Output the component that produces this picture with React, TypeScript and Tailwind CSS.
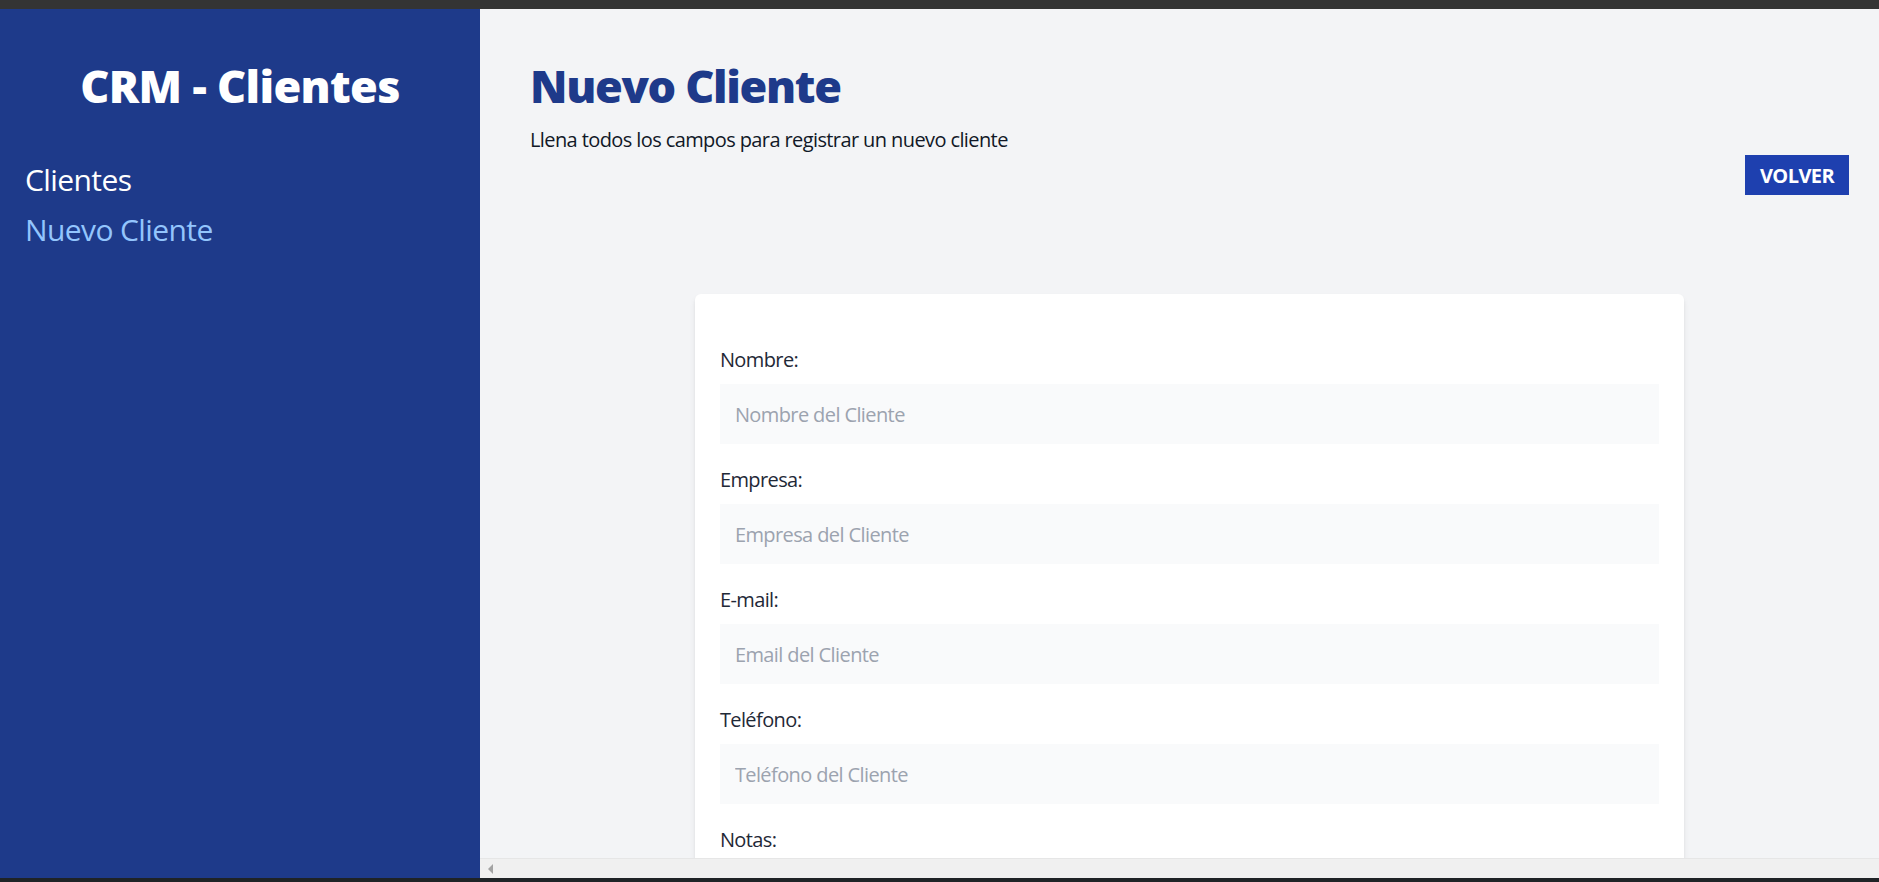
import React from "react";

const font = { fontFamily: '"Open Sans", "Noto Sans", sans-serif' };

function Field({ label, placeholder, type = "text" }: { label: string; placeholder: string; type?: string }) {
  return (
    <div className="mb-[20px]">
      <label className="block mb-[9px] pt-[1px] text-[20px] leading-[30px] text-[#1f2937] tracking-[-0.03em]">{label}</label>
      <input
        type={type}
        placeholder={placeholder}
        className="block w-full bg-[#f9fafb] px-[15px] pt-[16px] pb-[14px] text-[20px] leading-[30px] tracking-[-0.03em] text-[#1f2937] placeholder:text-[#9ca3af] outline-none"
      />
    </div>
  );
}

export default function App() {
  return (
    <div className="h-screen flex flex-col bg-[#1f2326] overflow-hidden" style={font}>
      <div className="h-[9px] shrink-0 bg-[#343434]" />
      <div className="flex flex-1 min-h-0">
        <aside className="w-[480px] shrink-0 bg-[#1e3a8a] px-[25px] pt-[52px]">
          <h1 className="text-center text-white text-[45px] leading-[50px] font-black tracking-[-0.015em]">CRM - Clientes</h1>
          <nav className="mt-[49px] flex flex-col gap-[10px]">
            <a className="text-[30px] leading-[40px] text-white tracking-[-0.02em]">Clientes</a>
            <a className="text-[30px] leading-[40px] text-[#93c5fd] tracking-[-0.02em]">Nuevo Cliente</a>
          </nav>
        </aside>
        <div className="flex-1 min-w-0 flex flex-col bg-[#f3f4f6]">
          <div className="flex-1 min-h-0 overflow-hidden">
            <main className="w-[1419px] p-[50px]">
              <h2 className="mt-[2px] text-[45px] leading-[50px] font-black text-[#1e3a8a] tracking-[-0.03em]">Nuevo Cliente</h2>
              <p className="mt-[14px] text-[20px] leading-[30px] text-[#111827] tracking-[-0.03em]">
                Llena todos los campos para registrar un nuevo cliente
              </p>
              <div className="flex justify-end">
                <button className="bg-[#1e40af] text-white font-bold uppercase text-[20px] leading-[30px] px-[15px] pt-[6px] pb-[4px] tracking-[-0.03em]">
                  Volver
                </button>
              </div>
              <div className="mt-[99px] mx-auto w-3/4 bg-white rounded-[6px] shadow-md px-[25px] py-[50px]">
                <form>
                  <Field label="Nombre:" placeholder="Nombre del Cliente" />
                  <Field label="Empresa:" placeholder="Empresa del Cliente" />
                  <Field label="E-mail:" placeholder="Email del Cliente" type="email" />
                  <Field label="Teléfono:" placeholder="Teléfono del Cliente" type="tel" />
                  <div className="mb-[20px]">
                    <label className="block mb-[9px] pt-[1px] text-[20px] leading-[30px] text-[#1f2937] tracking-[-0.03em]">Notas:</label>
                    <textarea className="block w-full h-[200px] bg-[#f9fafb] p-[15px] text-[20px] leading-[30px] outline-none" />
                  </div>
                </form>
              </div>
            </main>
          </div>
          <div className="h-[20px] shrink-0 bg-[#f0f0f0] border-t border-[#e6e6e6] flex items-center pl-[8px]">
            <div className="w-0 h-0 border-y-[5px] border-y-transparent border-r-[5px] border-r-[#a3a3a3]" />
          </div>
        </div>
      </div>
      <div className="h-[4px] shrink-0 bg-[#1f2326]" />
    </div>
  );
}
